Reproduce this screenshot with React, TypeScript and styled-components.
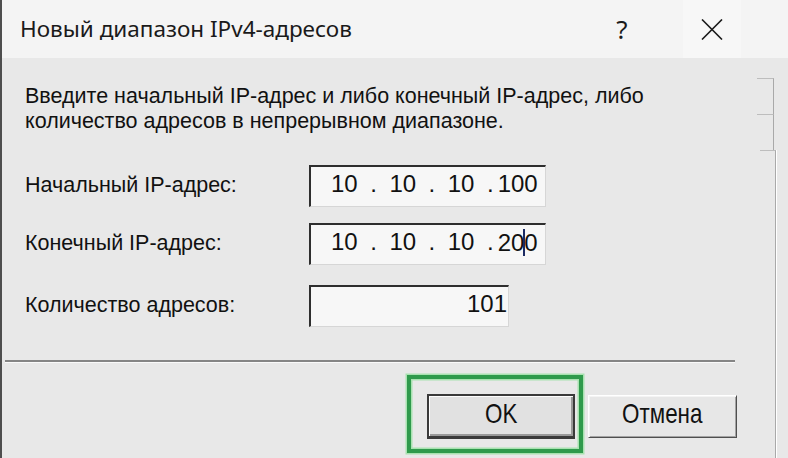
import React from "react";
import styled, { createGlobalStyle } from "styled-components";

const Global = createGlobalStyle`
  html, body { margin: 0; padding: 0; background: #e8e8e8; overflow: hidden; }
  #root { width: 788px; height: 458px; }
  * { box-sizing: border-box; }
`;

const Dialog = styled.div`
  width: 788px;
  height: 458px;
  display: flex;
  flex-direction: column;
  border-left: 2px solid #4e4e4e;
  font-family: "Liberation Sans", Arial, sans-serif;
  color: #111;
`;

const TitleBar = styled.div`
  height: 58px;
  flex: none;
  display: flex;
  align-items: center;
  background: #f4f4f4;
  padding-left: 18px;
  padding-right: 47px;
`;

const Title = styled.div`
  flex: 1;
  font-family: "Noto Sans", sans-serif;
  font-size: 22.5px;
  line-height: 1;
  color: #1a1a1a;
`;

const HelpButton = styled.div`
  width: 44px;
  margin-right: 39px;
  text-align: center;
  font-family: "Noto Sans", sans-serif;
  font-size: 26px;
  line-height: 58px;
  color: #1a1a1a;
`;

const CloseButton = styled.div`
  width: 58px;
  height: 58px;
  display: flex;
  align-items: center;
  justify-content: center;
  background: #f7f7f7;
`;

const Body = styled.div`
  flex: 1;
  display: flex;
  background: #e8e8e8;
`;

const Main = styled.div`
  width: 755px;
  display: flex;
  flex-direction: column;
  padding-top: 26px;
`;

const Description = styled.p`
  margin: 0;
  padding-left: 23px;
  font-size: 21.5px;
  line-height: 25px;
`;

const FieldRow = styled.div<{ $top: number }>`
  display: grid;
  grid-template-columns: 284px auto;
  align-items: baseline;
  padding-left: 23px;
  margin-top: ${(p) => p.$top}px;
`;

const Label = styled.span`
  font-size: 21.5px;
  line-height: 25px;
`;

const Field = styled.div<{ $width: number; $alignEnd?: boolean }>`
  width: ${(p) => p.$width}px;
  height: 42px;
  display: flex;
  align-items: center;
  justify-content: ${(p) => (p.$alignEnd ? "flex-end" : "flex-start")};
  padding: ${(p) => (p.$alignEnd ? "0 1px 5px 0" : "0 0 5px 20px")};
  border-top: 2px solid #2e2e2e;
  border-left: 2px solid #2e2e2e;
  border-right: 1px solid #d6d6d6;
  border-bottom: 1px solid #d6d6d6;
  background: #f7f7f7;
  font-size: 24px;
  line-height: 24px;
  color: #111;
`;

const Octet = styled.span`
  white-space: nowrap;
`;

const Dot = styled.span<{ $right?: number }>`
  margin-left: 12.5px;
  margin-right: ${(p) => (p.$right ?? 12.5)}px;
`;

const Caret = styled.span`
  display: inline-block;
  width: 2px;
  height: 27px;
  margin: 0 -1px;
  vertical-align: -5px;
  background: #1c2b63;
`;

const Separator = styled.div`
  margin-top: 33px;
  margin-left: 3px;
  width: 730px;
  height: 3px;
  border-top: 2px solid #858585;
  border-bottom: 1px solid #fafafa;
`;

const ButtonRow = styled.div`
  display: flex;
  justify-content: flex-end;
  align-items: center;
  gap: 13px;
  padding-top: 31px;
  padding-right: 20px;
`;

const DefaultWrap = styled.div`
  position: relative;
  display: flex;
`;

const Highlight = styled.div`
  position: absolute;
  top: -19px;
  left: -20px;
  right: -8px;
  bottom: -14px;
  border: 4px solid #2f9a4c;
  box-shadow: 0 0 0 1.5px #a8e2b0, inset 0 0 0 1.5px #a8e2b0;
  pointer-events: none;
`;

const Button = styled.button<{ $default?: boolean }>`
  width: ${(p) => (p.$default ? 148 : 149)}px;
  height: ${(p) => (p.$default ? 45 : 43)}px;
  padding: 0 0 5px 0;
  display: flex;
  align-items: center;
  justify-content: center;
  font-family: "Liberation Sans", Arial, sans-serif;
  font-size: 28px;
  color: #111;
  background: ${(p) => (p.$default ? "#e1e1e1" : "#e7e7e7")};
  border-style: solid;
  border-width: ${(p) => (p.$default ? "2px 2px 3px 2px" : "1px")};
  border-color: ${(p) =>
    p.$default ? "#3a3a3a" : "#ffffff #4f4f4f #4f4f4f #ffffff"};
  box-shadow: ${(p) =>
    p.$default
      ? "inset 1px 1px 0 #fdfdfd, inset -2px -2px 0 #999"
      : "inset 1px 1px 0 #f4f4f4, inset -1px -1px 0 #a3a3a3"};
`;

const ButtonLabel = styled.span`
  display: inline-block;
  transform: scaleX(0.8);
  line-height: 1;
`;

const Rail = styled.div`
  width: 21px;
  display: flex;
  flex-direction: column;
  padding-top: 20px;
`;

const RailSegment = styled.div<{ $last?: boolean }>`
  height: ${(p) => (p.$last ? "auto" : "36px")};
  flex: ${(p) => (p.$last ? 1 : "none")};
  margin-left: ${(p) => (p.$last ? 3 : 0)}px;
  margin-right: ${(p) => (p.$last ? 2 : 4)}px;
  border-top: 1px solid #bdbdbd;
  border-right: 1px solid #a9a9a9;
  box-shadow: ${(p) => (p.$last ? "1px 0 0 #ffffff" : "none")};
`;

const CloseIcon = () => (
  <svg width="22" height="21" viewBox="0 0 22 21">
    <path d="M1 0.5 L21 20.5 M21 0.5 L1 20.5" stroke="#1a1a1a" strokeWidth="1.6" fill="none" />
  </svg>
);

const IpAddress = ({ octets, caretAt }: { octets: string[]; caretAt?: number }) => (
  <>
    {octets.map((o, i) => (
      <React.Fragment key={i}>
        {i > 0 && <Dot $right={i === 3 ? 4 : undefined}>.</Dot>}
        <Octet>
          {i === 3 && caretAt !== undefined ? (
            <>
              {o.slice(0, caretAt)}
              <Caret />
              {o.slice(caretAt)}
            </>
          ) : (
            o
          )}
        </Octet>
      </React.Fragment>
    ))}
  </>
);

export default function App() {
  return (
    <>
      <Global />
      <Dialog>
        <TitleBar>
          <Title>Новый диапазон IPv4-адресов</Title>
          <HelpButton>?</HelpButton>
          <CloseButton>
            <CloseIcon />
          </CloseButton>
        </TitleBar>
        <Body>
          <Main>
            <Description>
              Введите начальный IP-адрес и либо конечный IP-адрес, либо
              <br />
              количество адресов в непрерывном диапазоне.
            </Description>
            <FieldRow $top={31}>
              <Label>Начальный IP-адрес:</Label>
              <Field $width={237}>
                <IpAddress octets={["10", "10", "10", "100"]} />
              </Field>
            </FieldRow>
            <FieldRow $top={16}>
              <Label>Конечный IP-адрес:</Label>
              <Field $width={237}>
                <IpAddress octets={["10", "10", "10", "200"]} caretAt={2} />
              </Field>
            </FieldRow>
            <FieldRow $top={20}>
              <Label>Количество адресов:</Label>
              <Field $width={200} $alignEnd>
                101
              </Field>
            </FieldRow>
            <Separator />
            <ButtonRow>
              <DefaultWrap>
                <Button $default>
                  <ButtonLabel>OK</ButtonLabel>
                </Button>
                <Highlight />
              </DefaultWrap>
              <Button>
                <ButtonLabel>Отмена</ButtonLabel>
              </Button>
            </ButtonRow>
          </Main>
          <Rail>
            <RailSegment />
            <RailSegment />
            <RailSegment $last />
          </Rail>
        </Body>
      </Dialog>
    </>
  );
}
